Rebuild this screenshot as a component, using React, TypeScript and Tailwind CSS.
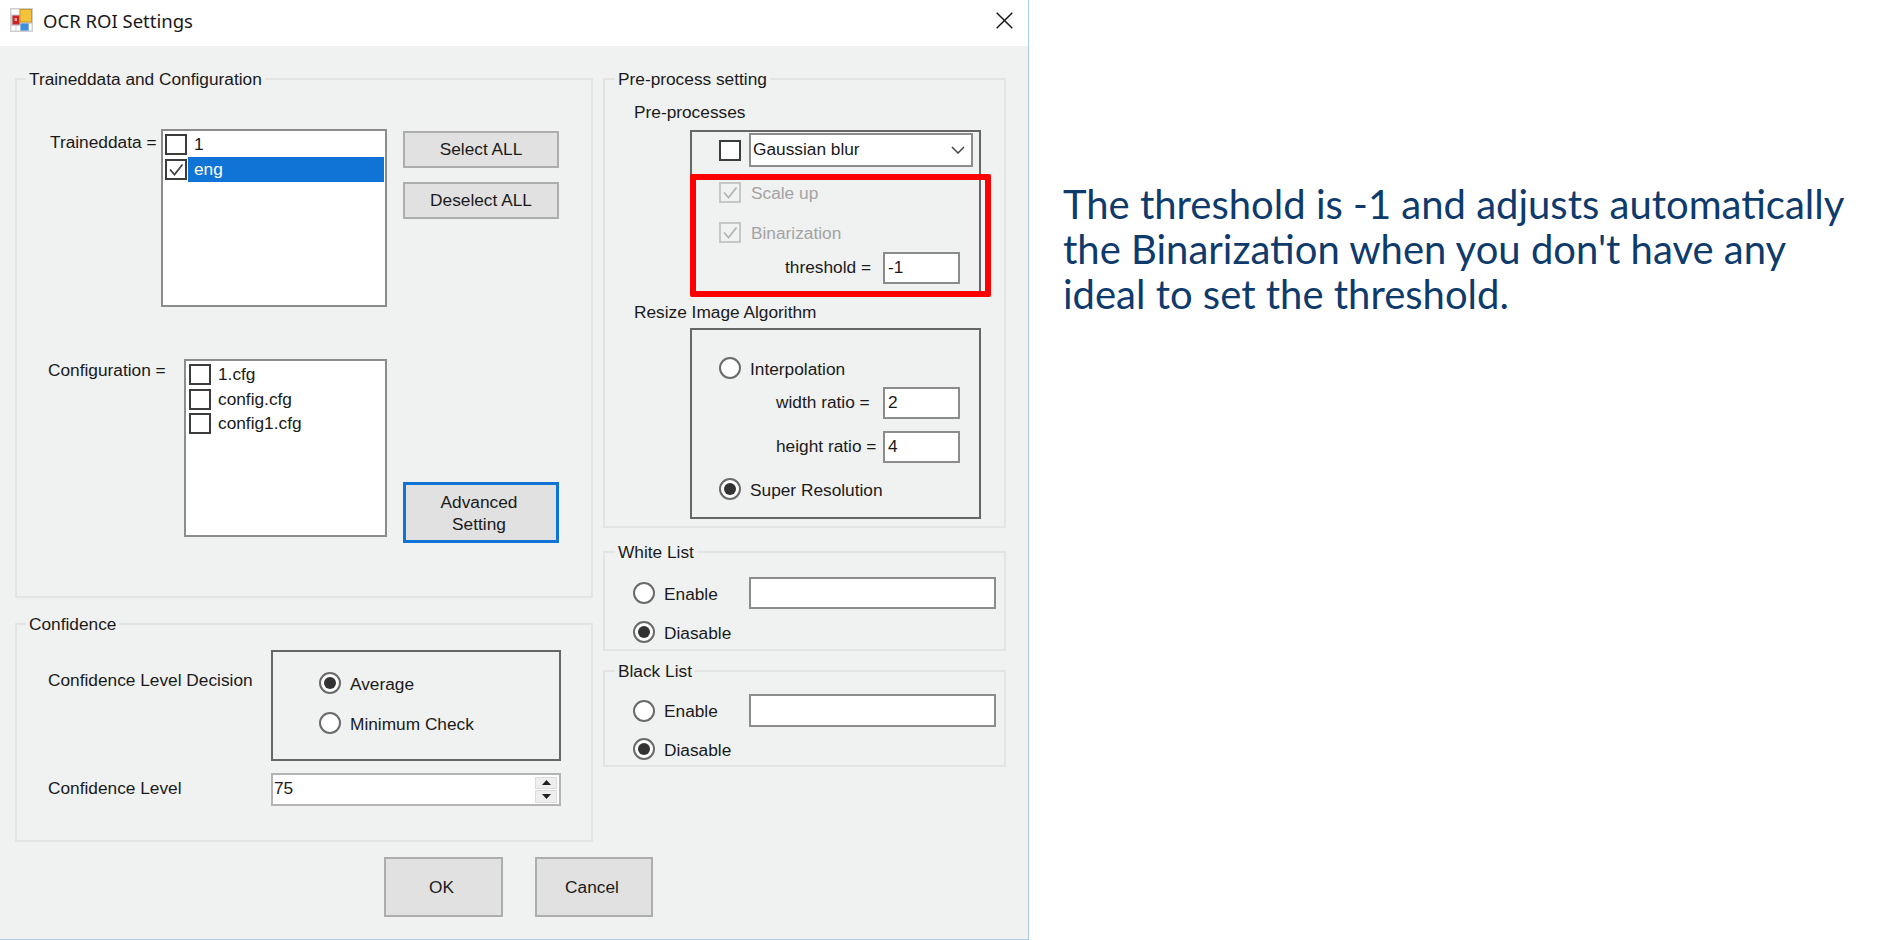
// App.tsx
import React from 'react';

const Check = ({ color }: { color: string }) => (
  <svg viewBox="0 0 18 17" className="w-full h-full">
    <path d="M3 8.5 L7.5 13.5 L15.5 3.5" fill="none" stroke={color} strokeWidth="1.8" />
  </svg>
);

const CheckBox = ({ checked, disabled }: { checked?: boolean; disabled?: boolean }) => (
  <div className={`shrink-0 w-[22px] h-[21px] border-2 ${disabled ? 'border-[#c6c6c6]' : 'border-[#3c3c3c] bg-white'}`}>
    {checked && <Check color={disabled ? '#b4b4b4' : '#444444'} />}
  </div>
);

const Radio = ({ checked }: { checked?: boolean }) => (
  <div className="shrink-0 w-[22px] h-[22px] rounded-full border-2 border-[#6a6a6a] bg-white flex items-center justify-center">
    {checked && <div className="w-[12px] h-[12px] rounded-full bg-[#333333]" />}
  </div>
);

const GroupBox = ({ title, left, className, children }: { title: string; left: string; className: string; children: React.ReactNode }) => (
  <div className={`relative border-2 border-[#e4e4e4] ${className}`}>
    <div className={`absolute top-[-11px] ${left} h-[20px] px-[3px] bg-[#f0f1f1] leading-[20px] whitespace-nowrap`}>{title}</div>
    {children}
  </div>
);

const Button = ({ className, children }: { className: string; children: React.ReactNode }) => (
  <div className={`shrink-0 flex items-center justify-center text-center pt-[1px] bg-[#e1e1e1] ${className}`}>{children}</div>
);

const TextInput = ({ value, className }: { value?: string; className: string }) => (
  <div className={`shrink-0 bg-white border-2 border-[#8c8c8c] pl-[3px] flex items-center ${className}`}>{value}</div>
);

const ListRow = ({ label, checked, selected }: { label: string; checked?: boolean; selected?: boolean }) => (
  <div className="flex items-center h-[24.7px]">
    <CheckBox checked={checked} />
    <div className={`flex-1 h-[25px] ml-[1px] pl-[6px] leading-[24px] ${selected ? 'bg-[#0f74d6] text-white' : ''}`}>{label}</div>
  </div>
);

const RadioRow = ({ label, checked, className }: { label: string; checked?: boolean; className?: string }) => (
  <div className={`flex items-center gap-[9px] ${className ?? ''}`}>
    <Radio checked={checked} />
    <span className="leading-[20px] pt-[1px]">{label}</span>
  </div>
);

const AppIcon = () => (
  <svg viewBox="0 0 23 24" className="w-[23px] h-[24px] shrink-0">
    <rect x="0" y="0" width="23" height="24" fill="#cfcfcf" />
    <rect x="1.5" y="1.5" width="8" height="5" fill="#ffffff" />
    <rect x="1.5" y="18" width="4" height="4.5" fill="#ffffff" />
    <rect x="6.5" y="18" width="4" height="4.5" fill="#ffffff" />
    <rect x="19" y="16" width="2.5" height="6.5" fill="#ffffff" />
    <rect x="2.5" y="7.5" width="7" height="9" fill="#c8252b" />
    <rect x="4.5" y="10" width="2.5" height="3" fill="#f2a0a0" />
    <rect x="10" y="1.5" width="11.5" height="12.5" fill="#f5c33b" stroke="#c99a2a" strokeWidth="1" />
    <rect x="10.5" y="15.5" width="8" height="7" fill="#3f8fe0" />
  </svg>
);

const plainBtn = 'border-2 border-[#adadad]';

export default function App() {
  return (
    <div className="w-[1892px] h-[940px] bg-white flex overflow-hidden font-['Liberation_Sans',Arial,sans-serif] text-[17.3px] text-[#1a1a1a]">
      <div className="w-[1029px] h-[940px] shrink-0 bg-[#f0f1f1] border-r border-b border-[#a9cbe8] flex flex-col">
        {/* title bar */}
        <div className="h-[46px] shrink-0 bg-white flex items-center pl-[10px] pr-[15px] pb-[6px]">
          <AppIcon />
          <div className="ml-[10px] mt-[2px] text-[18.5px] font-['Noto_Sans',sans-serif]">OCR ROI Settings</div>
          <svg viewBox="0 0 17 17" className="ml-auto w-[17px] h-[17px]">
            <path d="M0.7 0.7 L16.3 16.3 M16.3 0.7 L0.7 16.3" stroke="#1a1a1a" strokeWidth="1.5" />
          </svg>
        </div>

        <div className="flex gap-[10px] pl-[15px] pt-[32px]">
          {/* left column */}
          <div className="w-[578px] flex flex-col">
            <GroupBox title="Traineddata and Configuration" left="left-[9px]" className="h-[520px] pt-[49px]">
              <div className="flex items-start">
                <div className="w-[144px] pl-[33px] pt-[3px] leading-[20px] whitespace-nowrap">Traineddata =</div>
                <div className="w-[226px] h-[178px] bg-white border-2 border-[#8c8c8c] pl-[2px] pr-[1px] pt-[1px]">
                  <ListRow label="1" />
                  <ListRow label="eng" checked selected />
                </div>
                <div className="ml-[16px] mt-[2px] flex flex-col gap-[14px]">
                  <Button className={`w-[156px] h-[37px] ${plainBtn}`}>Select ALL</Button>
                  <Button className={`w-[156px] h-[37px] ${plainBtn}`}>Deselect ALL</Button>
                </div>
              </div>
              <div className="flex items-start mt-[52px] h-[184px]">
                <div className="w-[167px] pl-[31px] pt-[1px] leading-[20px] whitespace-nowrap">Configuration =</div>
                <div className="w-[203px] h-[178px] bg-white border-2 border-[#8c8c8c] pl-[3px] pt-[1px]">
                  <ListRow label="1.cfg" />
                  <ListRow label="config.cfg" />
                  <ListRow label="config1.cfg" />
                </div>
                <Button className="ml-[16px] mt-auto w-[156px] h-[61px] border-[3px] border-[#0f74d6] leading-[22px]">
                  <span className="-ml-[4px]">Advanced<br />Setting</span>
                </Button>
              </div>
            </GroupBox>

            <GroupBox title="Confidence" left="left-[9px]" className="mt-[25px] h-[219px] pt-[25px]">
              <div className="flex items-start">
                <div className="w-[254px] pl-[31px] pt-[20px] leading-[20px] whitespace-nowrap">Confidence Level Decision</div>
                <div className="w-[290px] h-[111px] border-2 border-[#666666] pl-[46px] pt-[20px] flex flex-col gap-[18px]">
                  <RadioRow label="Average" checked />
                  <RadioRow label="Minimum Check" />
                </div>
              </div>
              <div className="flex items-center mt-[12px]">
                <div className="w-[254px] pl-[31px] pb-[3px] leading-[20px]">Confidence Level</div>
                <div className="w-[290px] h-[33px] bg-white border-2 border-[#b4b4b4] flex items-center pl-[1px] pr-[2px]">
                  <span className="pb-[2px]">75</span>
                  <div className="ml-auto w-[22px] h-[26px] flex flex-col gap-[1px]">
                    <div className="flex-1 bg-[#eeeeee] border border-[#dcdcdc] flex items-center justify-center">
                      <svg viewBox="0 0 9 5" className="w-[9px] h-[5px]"><path d="M4.5 0 L9 5 L0 5 Z" fill="#222222" /></svg>
                    </div>
                    <div className="flex-1 bg-[#eeeeee] border border-[#dcdcdc] flex items-center justify-center">
                      <svg viewBox="0 0 9 5" className="w-[9px] h-[5px]"><path d="M0 0 L9 0 L4.5 5 Z" fill="#222222" /></svg>
                    </div>
                  </div>
                </div>
              </div>
            </GroupBox>

            <div className="flex gap-[32px] ml-[369px] mt-[15px]">
              <Button className={`w-[119px] h-[60px] pr-[4px] ${plainBtn}`}>OK</Button>
              <Button className={`w-[118px] h-[60px] pr-[4px] ${plainBtn}`}>Cancel</Button>
            </div>
          </div>

          {/* right column */}
          <div className="w-[403px] flex flex-col">
            <GroupBox title="Pre-process setting" left="left-[10px]" className="h-[450px] pt-[22px]">
              <div className="pl-[29px] leading-[20px]">Pre-processes</div>
              <div className="relative ml-[85px] mt-[8px] w-[291px] h-[163px] border-2 border-b-0 border-[#666666] pt-[1px]">
                <div className="flex items-center pl-[27px] gap-[8px]">
                  <CheckBox />
                  <div className="w-[224px] h-[34px] bg-white border-2 border-[#8c8c8c] flex items-center pl-[2px] pr-[6px]">
                    <span>Gaussian blur</span>
                    <svg viewBox="0 0 14 8" className="ml-auto w-[14px] h-[8px]">
                      <path d="M1 1 L7 7 L13 1" fill="none" stroke="#444444" strokeWidth="1.5" />
                    </svg>
                  </div>
                </div>
                <div className="flex items-center pl-[27px] gap-[10px] mt-[15px] text-[#a3a3a3]">
                  <CheckBox checked disabled />
                  <span className="leading-[20px]">Scale up</span>
                </div>
                <div className="flex items-center pl-[27px] gap-[10px] mt-[19px] text-[#a3a3a3]">
                  <CheckBox checked disabled />
                  <span className="leading-[20px]">Binarization</span>
                </div>
                <div className="flex items-center mt-[9px] pl-[93px]">
                  <div className="w-[98px]">threshold =</div>
                  <TextInput value="-1" className="w-[77px] h-[32px]" />
                </div>
                {/* red highlight drawn over the screenshot */}
                <div className="absolute left-[-2px] top-[42px] w-[301px] h-[123px] border-[6px] border-[#ff0000] rounded-[2px]" />
              </div>

              <div className="pl-[29px] mt-[9px] leading-[20px]">Resize Image Algorithm</div>
              <div className="ml-[85px] mt-[6px] w-[291px] h-[191px] border-2 border-[#666666] pt-[27px]">
                <RadioRow label="Interpolation" className="pl-[27px]" />
                <div className="flex items-center mt-[8px] pl-[84px]">
                  <div className="w-[107px]">width ratio =</div>
                  <TextInput value="2" className="w-[77px] h-[32px]" />
                </div>
                <div className="flex items-center mt-[12px] pl-[84px]">
                  <div className="w-[107px]">height ratio =</div>
                  <TextInput value="4" className="w-[77px] h-[32px]" />
                </div>
                <RadioRow label="Super Resolution" checked className="pl-[27px] mt-[15px]" />
              </div>
            </GroupBox>

            <GroupBox title="White List" left="left-[10px]" className="mt-[23px] h-[100px] pt-[24px]">
              <div className="flex items-center pl-[28px]">
                <RadioRow label="Enable" className="w-[116px]" />
                <TextInput className="w-[247px] h-[32px]" />
              </div>
              <RadioRow label="Diasable" checked className="pl-[28px] mt-[12px]" />
            </GroupBox>

            <GroupBox title="Black List" left="left-[10px]" className="mt-[19px] h-[97px] pt-[22px]">
              <div className="flex items-center pl-[28px]">
                <RadioRow label="Enable" className="w-[116px]" />
                <TextInput className="w-[247px] h-[33px]" />
              </div>
              <RadioRow label="Diasable" checked className="pl-[28px] mt-[11px]" />
            </GroupBox>
          </div>
        </div>
      </div>

      <div className="ml-[34px] pt-[182px] w-[820px] text-[40px] leading-[45px] text-[#0e3a6c] font-['Lato',sans-serif]">
        The threshold is -1 and adjusts automatically<br />
        the Binarization when you don't have any<br />
        ideal to set the threshold.
      </div>
    </div>
  );
}
